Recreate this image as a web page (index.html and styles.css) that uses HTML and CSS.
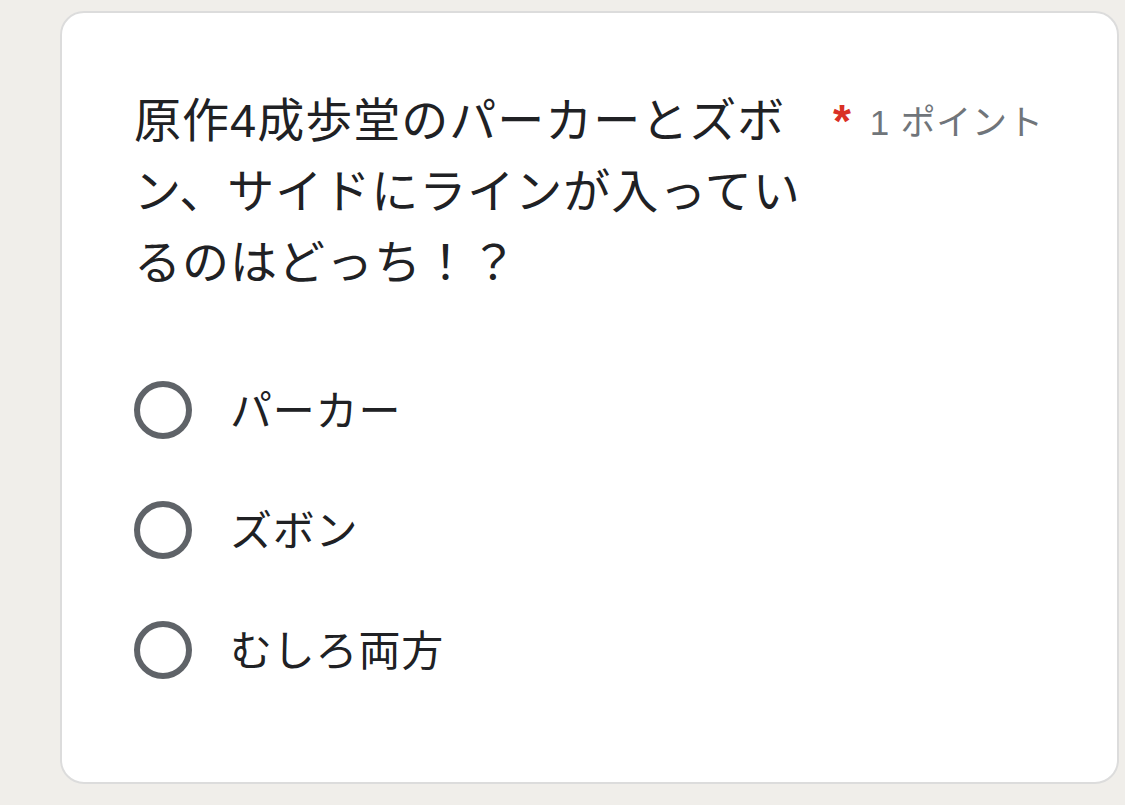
FILE: index.html
```html
<!DOCTYPE html>
<html lang="ja">
<head>
    <meta charset="UTF-8">
    <meta name="viewport" content="width=device-width, initial-scale=1.0">
    <title>クイズ</title>
    <link rel="stylesheet" href="styles.css">
</head>
<body>

<!-- Картка питання -->
<div class="card">
    <div class="question-head">
        <div class="question-title">原作4成歩堂のパーカーとズボン、サイドにラインが入っているのはどっち！？</div>
        <div class="points"><span class="required">*</span><span>1 ポイント</span></div>
    </div>

    <div class="options">
        <label class="option">
            <span class="radio"></span>
            <span class="option-text">パーカー</span>
        </label>
        <label class="option">
            <span class="radio"></span>
            <span class="option-text">ズボン</span>
        </label>
        <label class="option">
            <span class="radio"></span>
            <span class="option-text">むしろ両方</span>
        </label>
    </div>
</div>

</body>
</html>
```

FILE: styles.css
```css
/* Фон сторінки */
body {
    margin: 0;
    background-color: #f0eeea;
    font-family: "Liberation Sans", "Noto Sans CJK JP", sans-serif;
    color: #202124;
}

/* Біла картка з рамкою */
.card {
    margin: 11px 0 0 60px;
    width: 1059px;
    height: 773px;
    box-sizing: border-box;
    background-color: #fff;
    border: 2px solid #dcdcdc;
    border-radius: 24px;
    padding: 72px 0 0 72px;
}

.question-head {
    display: flex;
    align-items: flex-start;
}

.question-title {
    width: 684px;
    font-size: 47px;
    line-height: 71px;
    letter-spacing: 1px;
}

/* Кількість балів */
.points {
    display: flex;
    align-items: flex-start;
    margin-left: 15px;
    margin-top: 16px;
    font-size: 35px;
    line-height: 44px;
    letter-spacing: 0.8px;
    color: #70757a;
    white-space: nowrap;
}

.required {
    color: #d93025;
    font-size: 46px;
    font-weight: bold;
    line-height: 44px;
    margin-top: -2px;
    margin-right: 18px;
}

/* Варіанти відповіді */
.options {
    display: flex;
    flex-direction: column;
    margin-top: 52px;
}

.option {
    display: flex;
    align-items: center;
    height: 120px;
    gap: 38px;
}

.radio {
    width: 58px;
    height: 58px;
    border: 6px solid #5f6368;
    border-radius: 50%;
    box-sizing: border-box;
}

.option-text {
    font-size: 42px;
    letter-spacing: 0.8px;
    margin-top: -6px;
}
```
